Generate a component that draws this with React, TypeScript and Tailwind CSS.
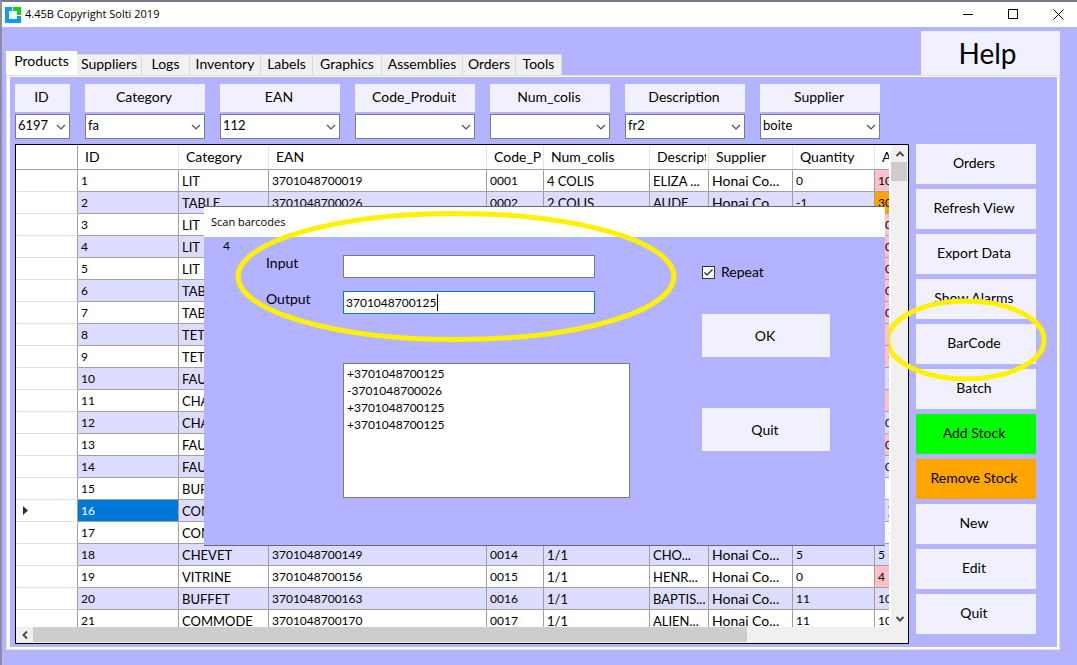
import clsx from "clsx";

const tabs = [
  { label: "Suppliers", width: "w-[65px]" },
  { label: "Logs", width: "w-[48px]" },
  { label: "Inventory", width: "w-[71px]" },
  { label: "Labels", width: "w-[52px]" },
  { label: "Graphics", width: "w-[69px]" },
  { label: "Assemblies", width: "w-[81px]" },
  { label: "Orders", width: "w-[53px]" },
  { label: "Tools", width: "w-[46px]" },
];

const filters = [
  { label: "ID", value: "6197", width: "w-[55px]" },
  { label: "Category", value: "fa", width: "w-[120px]" },
  { label: "EAN", value: "112", width: "w-[120px]" },
  { label: "Code_Produit", value: "", width: "w-[120px]" },
  { label: "Num_colis", value: "", width: "w-[120px]" },
  { label: "Description", value: "fr2", width: "w-[120px]" },
  { label: "Supplier", value: "boite", width: "w-[120px]" },
];

const columns = [
  { label: "ID", width: "w-[101px]" },
  { label: "Category", width: "w-[90px]" },
  { label: "EAN", width: "w-[218px]" },
  { label: "Code_Produit", width: "w-[57px]" },
  { label: "Num_colis", width: "w-[106px]" },
  { label: "Description", width: "w-[59px]" },
  { label: "Supplier", width: "w-[84px]" },
  { label: "Quantity", width: "w-[82px]" },
  { label: "Alarm", width: "w-[60px]" },
];

type Row = {
  category: string;
  ean?: string;
  code?: string;
  colis?: string;
  description?: string;
  supplier?: string;
  quantity?: string;
  alarm?: string;
  tone?: "pink" | "orange";
};

const rows: Row[] = [
  { category: "LIT", ean: "3701048700019", code: "0001", colis: "4 COLIS", description: "ELIZA ...", supplier: "Honai Co...", quantity: "0", alarm: "10", tone: "pink" },
  { category: "TABLE", ean: "3701048700026", code: "0002", colis: "2 COLIS", description: "AUDE ...", supplier: "Honai Co...", quantity: "-1", alarm: "30", tone: "orange" },
  { category: "LIT", alarm: "10-", tone: "pink" },
  { category: "LIT", alarm: "10", tone: "pink" },
  { category: "LIT", alarm: "10", tone: "pink" },
  { category: "TABLE", alarm: "10-", tone: "pink" },
  { category: "TABLE", alarm: "10-", tone: "pink" },
  { category: "TETE DE LIT", tone: "pink" },
  { category: "TETE DE LIT", alarm: "5 -", tone: "pink" },
  { category: "FAUTEUIL", alarm: "5 -" },
  { category: "CHAISE", tone: "pink" },
  { category: "CHAISE", alarm: "10" },
  { category: "FAUTEUIL", alarm: "10-", tone: "pink" },
  { category: "FAUTEUIL", alarm: "10-" },
  { category: "BUFFET" },
  { category: "COMMODE", alarm: "5 )" },
  { category: "COMMODE", alarm: "5 -" },
  { category: "CHEVET", ean: "3701048700149", code: "0014", colis: "1/1", description: "CHO...", supplier: "Honai Co...", quantity: "5", alarm: "5 -" },
  { category: "VITRINE", ean: "3701048700156", code: "0015", colis: "1/1", description: "HENR...", supplier: "Honai Co...", quantity: "0", alarm: "4", tone: "pink" },
  { category: "BUFFET", ean: "3701048700163", code: "0016", colis: "1/1", description: "BAPTIS...", supplier: "Honai Co...", quantity: "11", alarm: "10" },
  { category: "COMMODE", ean: "3701048700170", code: "0017", colis: "1/1", description: "ALIEN...", supplier: "Honai Co...", quantity: "11", alarm: "10" },
];

const SELECTED_ROW = 16;

const actions = [
  { label: "Orders", color: "bg-[#f0f0ff]" },
  { label: "Refresh View", color: "bg-[#f0f0ff]" },
  { label: "Export Data", color: "bg-[#f0f0ff]" },
  { label: "Show Alarms", color: "bg-[#f0f0ff]" },
  { label: "BarCode", color: "bg-[#f0f0ff]" },
  { label: "Batch", color: "bg-[#f0f0ff]" },
  { label: "Add Stock", color: "bg-[#00ff00]" },
  { label: "Remove Stock", color: "bg-[#ffa500]" },
  { label: "New", color: "bg-[#f0f0ff]" },
  { label: "Edit", color: "bg-[#f0f0ff]" },
  { label: "Quit", color: "bg-[#f0f0ff]" },
];

function TitleBar() {
  return (
    <header className="flex h-[27px] items-center border-t-2 border-[#77778c] bg-white font-['Open_Sans',sans-serif] text-black">
      <svg className="ml-[3px] h-4 w-4" viewBox="0 0 16 16" aria-hidden="true">
        <path d="M0 0H7V4H4V12H12V9H16V16H0Z" fill="#0a9bff" />
        <path d="M8 0H16V8H12V4H8Z" fill="#0fd40f" />
      </svg>
      <h1 className="ml-1 flex-1 text-[11px]">4.45B Copyright Solti 2019</h1>
      <div className="flex h-full">
        <button aria-label="Minimize" className="flex w-9 items-center justify-center">
          <svg className="h-[11px] w-[11px]" viewBox="0 0 11 11">
            <path d="M0 5.5H10" stroke="#000" />
          </svg>
        </button>
        <button aria-label="Maximize" className="flex w-[54px] items-center justify-center">
          <svg className="h-[11px] w-[11px]" viewBox="0 0 11 11">
            <rect x="0.5" y="0.5" width="9" height="9" fill="none" stroke="#000" />
          </svg>
        </button>
        <button aria-label="Close" className="flex w-[37px] items-center justify-center">
          <svg className="h-[11px] w-[11px]" viewBox="0 0 11 11">
            <path d="M0.5 0.5L10.5 10.5M10.5 0.5L0.5 10.5" stroke="#000" />
          </svg>
        </button>
      </div>
    </header>
  );
}

function TabBar() {
  return (
    <div className="flex items-end justify-between">
      <nav role="tablist" className="flex items-end text-sm">
        <button role="tab" aria-selected="true" className="h-6 w-[71px] bg-white pb-1 leading-5">
          Products
        </button>
        {tabs.map((tab) => (
          <button
            key={tab.label}
            role="tab"
            aria-selected="false"
            className={clsx("h-[21px] border-t border-r border-[#d9d9d9] bg-[#f0f0f0] pb-0.5 leading-4", tab.width)}
          >
            {tab.label}
          </button>
        ))}
      </nav>
      <button className="mr-[17px] h-11 w-[139px] bg-[#f0f0ff] pr-1.5 text-[28px] leading-8">Help</button>
    </div>
  );
}

function Filters() {
  return (
    <div className="flex gap-[15px]">
      {filters.map((filter) => (
        <div key={filter.label} className={clsx("flex flex-col gap-0.5", filter.width)}>
          <button className="h-7 bg-[#f0f0ff] pr-0.5 pb-0.5 text-sm">{filter.label}</button>
          <div className="relative">
            <select
              aria-label={filter.label}
              defaultValue={filter.value}
              className="block h-[25px] w-full appearance-none border border-[#7a7a8a] bg-white px-0.5 pb-0.5 text-[13px] outline-none"
            >
              <option>{filter.value}</option>
            </select>
            <svg className="pointer-events-none absolute top-2.5 right-1 h-[6px] w-[10px]" viewBox="0 0 10 6">
              <path d="M1 1L5 5L9 1" fill="none" stroke="#505050" strokeWidth="1.2" />
            </svg>
          </div>
        </div>
      ))}
    </div>
  );
}

function ProductTable() {
  return (
    <table className="w-[918px] table-fixed border-separate border-spacing-0 text-left text-xs">
      <thead>
        <tr className="h-[25px] text-sm">
          <th className="w-[62px] border-r border-b border-[#a0a0a0]" />
          {columns.map((column) => (
            <th
              key={column.label}
              className={clsx("border-r border-b border-r-[#e5e5e5] border-b-[#a0a0a0] p-0 pl-[7px] font-normal", column.width)}
            >
              <div className="mr-0.5 overflow-hidden whitespace-nowrap">{column.label}</div>
            </th>
          ))}
        </tr>
      </thead>
      <tbody>
        {rows.map((row, i) => {
          const id = i + 1;
          const selected = id === SELECTED_ROW;
          const cells = [
            { text: row.category, size: "text-[13px]" },
            { text: row.ean, size: "text-xs" },
            { text: row.code, size: "text-xs" },
            { text: row.colis, size: "text-[13px]" },
            { text: row.description, size: "text-[13px]" },
            { text: row.supplier, size: "text-sm" },
            { text: row.quantity, size: "text-xs" },
          ];
          return (
            <tr key={id} className={clsx("h-[22px]", id % 2 === 0 ? "bg-[#dcdcff]" : "bg-white")}>
              <td className="border-r border-b border-r-[#a0a0a0] border-b-[#e0e0e0] bg-white p-0 pl-[7px]">
                {selected && (
                  <svg className="h-[9px] w-[5px]" viewBox="0 0 5 9">
                    <path d="M0 0L5 4.5L0 9Z" fill="#303030" />
                  </svg>
                )}
              </td>
              <td
                className={clsx(
                  "border-r border-b border-[#a0a0a0] p-0 pl-[3px]",
                  selected && "bg-[#0078d7] text-white",
                )}
              >
                {id}
              </td>
              {cells.map((cell, c) => (
                <td
                  key={c}
                  className={clsx(
                    "overflow-hidden border-r border-b border-[#a0a0a0] p-0 pl-[3px] leading-4 whitespace-nowrap",
                    cell.size,
                  )}
                >
                  {cell.text}
                </td>
              ))}
              <td
                className={clsx(
                  "border-b border-[#a0a0a0] p-0 pl-[3px] whitespace-nowrap",
                  row.tone === "pink" && "bg-[#ffc0cb]",
                  row.tone === "orange" && "bg-[#ffa500]",
                )}
              >
                {row.alarm}
              </td>
            </tr>
          );
        })}
      </tbody>
    </table>
  );
}

function ProductGrid() {
  return (
    <div className="min-w-0 flex-1 border border-black bg-white">
      <div className="flex h-[482px]">
        <div className="min-w-0 flex-1 overflow-hidden">
          <ProductTable />
        </div>
        <div className="ml-0.5 flex w-[17px] flex-col bg-[#f0f0f0]">
          <button aria-label="Scroll up" className="flex h-[17px] items-center justify-center">
            <svg className="h-[6px] w-2" viewBox="0 0 8 6">
              <path d="M0.5 5L4 1.5L7.5 5" fill="none" stroke="#505050" strokeWidth="2" />
            </svg>
          </button>
          <div className="mr-px h-[19px] bg-[#cdcdcd]" />
          <button aria-label="Scroll down" className="mt-auto flex h-[17px] items-center justify-center">
            <svg className="h-[6px] w-2" viewBox="0 0 8 6">
              <path d="M0.5 1L4 4.5L7.5 1" fill="none" stroke="#505050" strokeWidth="2" />
            </svg>
          </button>
        </div>
      </div>
      <div className="flex h-4 bg-[#f0f0f0]">
        <button aria-label="Scroll left" className="flex w-[17px] items-center justify-center">
          <svg className="h-2 w-[6px]" viewBox="0 0 6 8">
            <path d="M5 0.5L1.5 4L5 7.5" fill="none" stroke="#505050" strokeWidth="2" />
          </svg>
        </button>
        <div className="mb-px w-4/5 bg-[#cdcdcd]" />
      </div>
    </div>
  );
}

function ScanDialog() {
  return (
    <section
      role="dialog"
      aria-labelledby="scan-title"
      className="absolute top-[206px] left-[202px] w-[681px] border-y border-[#66667a] bg-[#b3b3ff]"
    >
      <h2
        id="scan-title"
        className="h-[30px] bg-white pl-[7px] font-['Open_Sans',sans-serif] text-[11px] leading-[30px]"
      >
        Scan barcodes
      </h2>
      <div className="flex h-[308px]">
        <span className="w-[62px] pl-[19px] text-xs leading-[18px]">4</span>
        <div className="flex w-[436px] flex-col pt-[18px]">
          <div className="flex">
            <label htmlFor="scan-input" className="w-[77px] text-sm leading-4">
              Input
            </label>
            <input
              id="scan-input"
              type="text"
              className="block h-[23px] w-[252px] border border-[#7a7a8a] bg-white px-0.5 text-xs outline-none"
            />
          </div>
          <div className="mt-[13px] flex">
            <label htmlFor="scan-output" className="w-[77px] text-sm leading-4">
              Output
            </label>
            <div className="relative">
              <input
                id="scan-output"
                type="text"
                defaultValue="3701048700125"
                className="block h-[23px] w-[252px] border border-[#0078d7] bg-white px-0.5 text-xs outline-none"
              />
              <span className="absolute top-[3px] left-[94px] h-[17px] w-px bg-black" />
            </div>
          </div>
          <textarea
            aria-label="Scanned barcodes"
            readOnly
            value={"+3701048700125\n-3701048700026\n+3701048700125\n+3701048700125"}
            className="mt-[49px] ml-[77px] h-[135px] w-[287px] resize-none overflow-hidden border border-[#7a7a8a] bg-white px-[3px] py-px text-xs leading-[17px] outline-none"
          />
        </div>
        <div className="flex flex-col items-start pt-[27px] text-sm">
          <label className="flex h-4 items-center gap-1.5">
            <span className="relative flex">
              <input
                type="checkbox"
                defaultChecked
                className="peer h-[13px] w-[13px] appearance-none border border-[#333333] bg-white"
              />
              <svg
                className="pointer-events-none absolute inset-0 hidden h-[13px] w-[13px] peer-checked:block"
                viewBox="0 0 13 13"
              >
                <path d="M2.5 6.5L5 9L10.5 3.5" fill="none" stroke="#222222" strokeWidth="1.2" />
              </svg>
            </span>
            Repeat
          </label>
          <button className="mt-[34px] h-[43px] w-32 bg-[#f0f0ff] pr-0.5">OK</button>
          <button className="mt-[51px] h-[43px] w-32 bg-[#f0f0ff] pr-0.5">Quit</button>
        </div>
      </div>
    </section>
  );
}

// Hand-drawn style highlights over the dialog fields and the BarCode button
function Highlights() {
  return (
    <>
      <svg
        className="pointer-events-none absolute top-[210px] left-[232px] h-[134px] w-[444px]"
        viewBox="0 0 444 134"
        aria-hidden="true"
      >
        <ellipse cx="222" cy="66.5" rx="218" ry="63" fill="none" stroke="#fff200" strokeWidth="5" />
      </svg>
      <svg
        className="pointer-events-none absolute top-[298px] right-[29px] h-[84px] w-[159px]"
        viewBox="3 0 159 84"
        aria-hidden="true"
      >
        <ellipse cx="80" cy="42" rx="78" ry="39" fill="none" stroke="#fff200" strokeWidth="5" />
      </svg>
    </>
  );
}

export default function App() {
  return (
    <div className="relative min-h-screen border-l-2 border-[#8c8ca6] bg-[#b3b3ff] font-[Lato,sans-serif] text-black">
      <TitleBar />
      <main className="pt-1 pl-1">
        <TabBar />
        <div className="mr-[17px] border border-[#dcdcec]">
          <div className="border-2 border-t-1 border-l-3 border-white pt-[7px] pr-[21px] pb-[3px] pl-[5px]">
            <Filters />
            <div className="mt-[5px] flex gap-[7px]">
              <ProductGrid />
              <aside className="flex w-[120px] flex-col gap-[5px]">
                {actions.map((action) => (
                  <button key={action.label} className={clsx("h-10 pr-1 pb-0.5 text-sm", action.color)}>
                    {action.label}
                  </button>
                ))}
              </aside>
            </div>
          </div>
        </div>
      </main>
      <ScanDialog />
      <Highlights />
    </div>
  );
}
